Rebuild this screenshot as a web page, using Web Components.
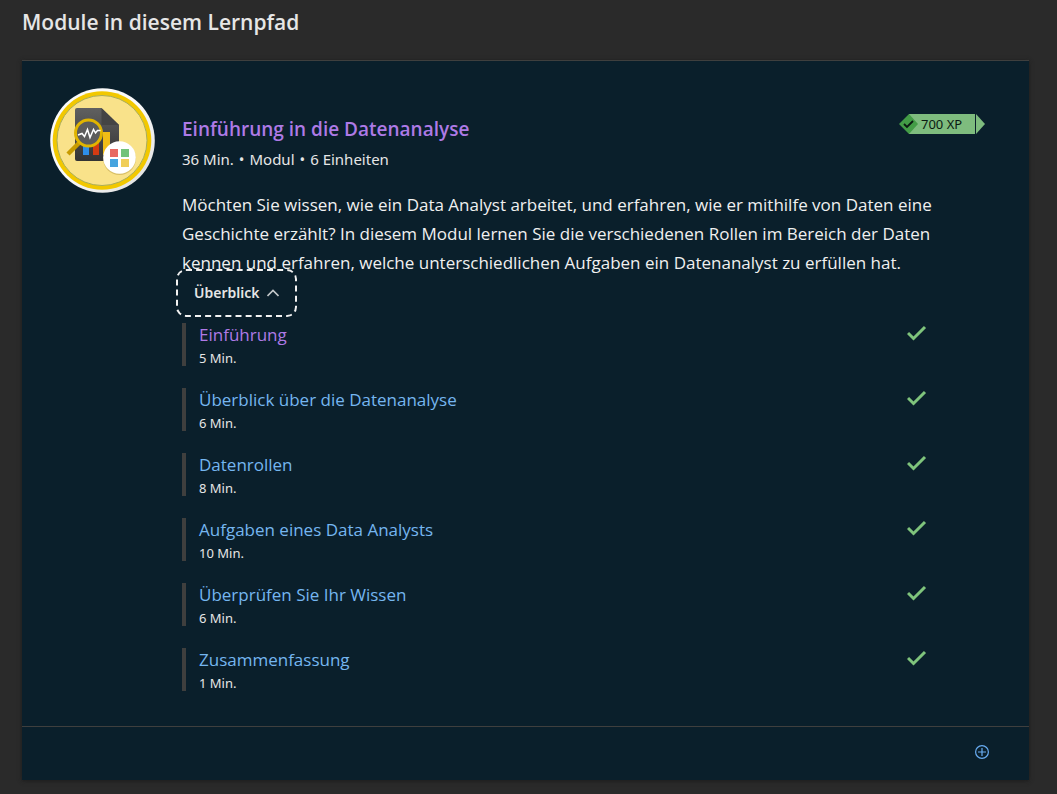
<!DOCTYPE html>
<html lang="de">
<head>
<meta charset="utf-8">
<meta name="viewport" content="width=device-width, initial-scale=1">
<title>Module in diesem Lernpfad</title>
<style>
  html { background: #2a2a2a; }
  body { margin: 0; font-family: "Open Sans", "Noto Sans", sans-serif; color: #e6e6e6; }
</style>
</head>
<body>
<learn-path heading="Module in diesem Lernpfad">
  <module-card>
    <module-badge slot="badge"></module-badge>
    <a slot="title" href="#modul">Einführung in die Datenanalyse</a>
    <span slot="meta">36 Min.</span>
    <span slot="meta">Modul</span>
    <span slot="meta">6 Einheiten</span>
    <xp-tag slot="xp">700 XP</xp-tag>
    <span slot="summary">Möchten Sie wissen, wie ein Data Analyst arbeitet, und erfahren, wie er mithilfe von Daten eine Geschichte erzählt? In diesem Modul lernen Sie die verschiedenen Rollen im Bereich der Daten kennen und erfahren, welche unterschiedlichen Aufgaben ein Datenanalyst zu erfüllen hat.</span>
    <module-unit visited time="5 Min." href="#einfuehrung">Einführung</module-unit>
    <module-unit time="6 Min." href="#ueberblick">Überblick über die Datenanalyse</module-unit>
    <module-unit time="8 Min." href="#rollen">Datenrollen</module-unit>
    <module-unit time="10 Min." href="#aufgaben">Aufgaben eines Data Analysts</module-unit>
    <module-unit time="6 Min." href="#wissen">Überprüfen Sie Ihr Wissen</module-unit>
    <module-unit time="1 Min." href="#zusammenfassung">Zusammenfassung</module-unit>
  </module-card>
</learn-path>

<template id="learn-path">
  <style>
    :host { display: block; padding: 8px 28px 14px 22px; }
    h2 { margin: 0 0 24px; font-size: 21px; line-height: 28px; font-weight: 600; }
  </style>
  <h2></h2>
  <slot></slot>
</template>

<template id="module-card">
  <style>
    :host { display: block; background: #0a1f2b; border-top: 1px solid #3f3f3e; box-shadow: 0 1px 4px #1c1c1c; }
    .main { display: flex; gap: 27px; padding: 27px 44px 35px 28px; }
    .body { flex: 1; min-width: 0; padding-top: 27px; }
    header { display: flex; justify-content: space-between; align-items: flex-start; }
    h3 { margin: 0; font-size: 19px; line-height: 28px; font-weight: 600; }
    ::slotted(a) { color: #ae7ae6; text-decoration: none; }
    ::slotted(xp-tag) { margin-top: -1px; }
    .meta { display: flex; margin-top: 6px; font: 15px/20px "Noto Sans", sans-serif; }
    slot[name=meta]::slotted(:not(:nth-of-type(1)))::before { content: "•"; margin: 0 5px; }
    p { margin: 21px 0 0; max-width: 752px; font-size: 17px; line-height: 29px; color: #f0f0f0; }
    button { display: inline-flex; align-items: center; border: 0; background: none; }
    .toggle { gap: 8px; height: 36px; margin: -2px 0 12px; padding: 0 12px; border-radius: 4px;
      color: #e6e6e6; font: 600 14px/20px "Noto Sans", sans-serif; outline: 2px dashed #f2f2f2; outline-offset: 4px; }
    .toggle svg { width: 12px; height: 12px; }
    .units { display: grid; gap: 22px; padding-right: 58px; }
    .units[hidden] { display: none; }
    footer { display: flex; justify-content: flex-end; padding: 17px 39px; min-height: 19px; border-top: 1px solid #3f3f3e; }
    .add { height: 16px; padding: 0; color: #68acf2; }
    .add svg { width: 16px; height: 16px; }
  </style>
  <div class="main">
    <slot name="badge"></slot>
    <div class="body">
      <header>
        <div>
          <h3><slot name="title"></slot></h3>
          <div class="meta"><slot name="meta"></slot></div>
        </div>
        <slot name="xp"></slot>
      </header>
      <p><slot name="summary"></slot></p>
      <button type="button" class="toggle" aria-expanded="true">Überblick
        <svg viewBox="0 0 12 12" fill="none" stroke="#c4c8ca" stroke-width="1.6" aria-hidden="true"><path d="M.5 9 6 3.5 11.5 9"/></svg>
      </button>
      <div class="units"><slot></slot></div>
    </div>
  </div>
  <footer>
    <button type="button" class="add" aria-label="Hinzufügen">
      <svg viewBox="0 0 16 16" fill="none" stroke="currentColor" stroke-width="1.2" aria-hidden="true"><circle cx="8" cy="8" r="6.4"/><path d="M8 4v8M4 8h8"/></svg>
    </button>
  </footer>
</template>

<template id="module-unit">
  <style>
    :host { display: flex; justify-content: space-between; align-items: flex-start; border-left: 4px solid #3f3f3e; padding-left: 13px; }
    a { display: block; font-size: 17px; line-height: 24px; color: #75b6f0; text-decoration: none; }
    :host([visited]) a { color: #ae7ae6; }
    span { display: block; margin-top: 4px; font: 13px/15px "Noto Sans", sans-serif; }
    svg { width: 20px; height: 20px; }
  </style>
  <div><a><slot></slot></a><span></span></div>
  <svg viewBox="0 0 20 20" fill="none" stroke="#7fc47c" stroke-width="3" role="img" aria-label="Abgeschlossen"><path d="M1 10 6.5 15.500 18 4"/></svg>
</template>

<template id="xp-tag">
  <style>
    :host { display: grid; grid-template-columns: 76px 9px; column-gap: 1px; height: 20px; color: #0b1a12; }
    .label { display: flex; align-items: center; margin-left: 10px; background: #7ebc7e; font: 13px/20px "Noto Sans", sans-serif; }
    .label svg { width: 20px; height: 20px; margin-left: -10px; margin-right: 2px; }
    .tip { width: 9px; height: 20px; }
  </style>
  <span class="label">
    <svg viewBox="0 0 20 20" aria-hidden="true"><path d="M10 0 19 10 10 20 0 10z" fill="#439c46"/><path d="m5 10 3 3 6-6" fill="none" stroke="#0b1a12" stroke-width="1.8"/></svg>
    <slot></slot>
  </span>
  <svg class="tip" viewBox="0 0 9 20" aria-hidden="true"><path d="M0 0 9 10 0 20z" fill="#7ebc7e"/></svg>
</template>

<template id="module-badge">
  <style>
    :host { display: block; flex: none; width: 105px; height: 105px; }
    svg { display: block; width: 100%; height: 100%; }
  </style>
  <svg viewBox="0 0 105 105" role="img" aria-label="Modulabzeichen">
    <defs>
      <linearGradient id="rim" x2="1" y2="1"><stop offset=".5" stop-color="#fafafa"/><stop offset="1" stop-color="#dcdcdc"/></linearGradient>
      <linearGradient id="sheet" x2="0" y2="1"><stop stop-color="#606060"/><stop offset="1" stop-color="#333"/></linearGradient>
    </defs>
    <circle cx="52.5" cy="52.5" r="52.3" fill="url(#rim)"/>
    <circle cx="52" cy="52.5" r="49.3" fill="#f2c800"/>
    <circle cx="52" cy="52.5" r="45" fill="#f9e28a" stroke="#a9ad5a"/>
    <path d="M27 20h24.5L69 37v36H27q-2 0-2-2V22q0-2 2-2z" fill="url(#sheet)"/>
    <path d="M51.5 20 69 37H51.5z" fill="#444"/>
    <path d="M33 53h6v14h-6z" fill="#2e8ee8"/><path d="M43 53h6v14h-6z" fill="#d43b12"/><path d="M53 44h7v23h-7z" fill="#f1bd16"/>
    <path d="M29 55 18 66" stroke="#c79b00" stroke-width="4.5"/>
    <circle cx="38.5" cy="45" r="13" fill="#5c5c5c" stroke="#e0b400" stroke-width="3"/>
    <path d="m28 47 4-1.5 2.5 3 3-7 2.500 8 3.5-8 2 3.5 2-2.5h3" fill="none" stroke="#fff" stroke-width="1.5"/>
    <circle cx="69.5" cy="70.5" r="16.5" fill="#b99d42" opacity=".5"/>
    <circle cx="69.5" cy="69.5" r="16.3" fill="#fff"/>
    <path d="M60 61h8v8h-8z" fill="#e86961"/><path d="M71 61h8v8h-8z" fill="#72c379"/><path d="M60 71h8v8h-8z" fill="#46a4df"/><path d="M71 71h8v8h-8z" fill="#f0ce59"/>
  </svg>
</template>

<script>
  class TemplateElement extends HTMLElement {
    constructor() {
      super();
      this.attachShadow({ mode: "open" })
        .append(document.getElementById(this.localName).content.cloneNode(true));
    }
  }
  customElements.define("learn-path", class extends TemplateElement {
    connectedCallback() { this.shadowRoot.querySelector("h2").textContent = this.getAttribute("heading"); }
  });
  customElements.define("module-card", class extends TemplateElement {
    connectedCallback() {
      const toggle = this.shadowRoot.querySelector(".toggle");
      const units = this.shadowRoot.querySelector(".units");
      toggle.onclick = () => {
        units.hidden = !units.hidden;
        toggle.setAttribute("aria-expanded", String(!units.hidden));
      };
    }
  });
  customElements.define("module-unit", class extends TemplateElement {
    connectedCallback() {
      this.shadowRoot.querySelector("a").href = this.getAttribute("href");
      this.shadowRoot.querySelector("span").textContent = this.getAttribute("time");
    }
  });
  customElements.define("xp-tag", class extends TemplateElement {});
  customElements.define("module-badge", class extends TemplateElement {});
</script>
</body>
</html>
